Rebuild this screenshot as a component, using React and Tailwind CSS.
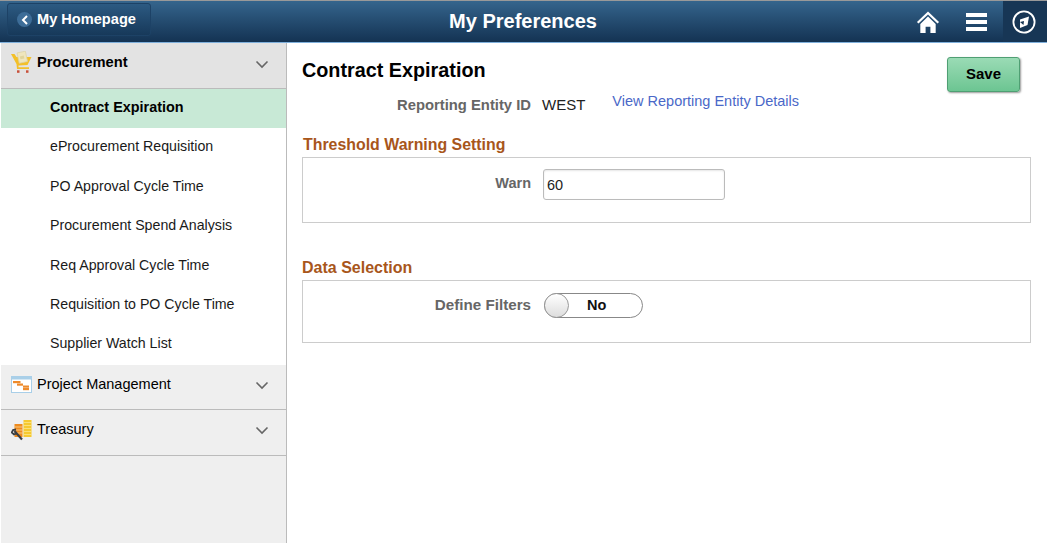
import React from "react";

const Chevron = () => (
  <svg width="14" height="9" viewBox="0 0 14 9" className="shrink-0">
    <path d="M1.5 1.5 L7 7 L12.5 1.5" fill="none" stroke="#666" strokeWidth="1.6" />
  </svg>
);

const Cart = () => (
  <svg width="21" height="22" viewBox="0 0 21 22" className="shrink-0">
    <path d="M0 3 H3.5 L5.5 6 H20.5 L16.5 14 L7.5 14.5 L7.5 16.2 H18 V18 H6 L5.5 13 Z" fill="#f3c029" />
    <rect x="7" y="1" width="8.5" height="10.5" fill="#efe6bd" stroke="#ddd2a6" strokeWidth="0.7" transform="rotate(-12 11 6)" />
    <rect x="9" y="5" width="4" height="3" fill="#e0d49c" transform="rotate(-12 11 6)" />
    <rect x="6" y="19.3" width="2.5" height="2.5" fill="#c8503a" />
    <rect x="15" y="19.3" width="2.5" height="2.5" fill="#c8503a" />
  </svg>
);

const Gantt = () => (
  <svg width="21" height="17" viewBox="0 0 21 17" className="mt-[1px] shrink-0">
    <rect x="0.5" y="0.5" width="20" height="16" fill="#fff" stroke="#a9cfe8" />
    <rect x="1" y="1" width="19" height="2.5" fill="#a9cfe8" />
    <rect x="2" y="5" width="7.5" height="2.2" fill="#ee8b2c" />
    <rect x="6" y="7.5" width="6" height="2.2" fill="#ee8b2c" />
    <rect x="12" y="9.5" width="6" height="2.2" fill="#ee8b2c" />
    <rect x="12" y="12" width="6" height="2.2" fill="#ee8b2c" />
  </svg>
);

const Treasury = () => (
  <svg width="21" height="21" viewBox="0 0 21 21" className="shrink-0">
    <rect x="12.5" y="0" width="8" height="17" fill="#f6c92f" />
    <path d="M12.5 2.5 H20.5 M12.5 5.5 H20.5 M12.5 8.5 H20.5 M12.5 11.5 H20.5 M12.5 14.5 H20.5" stroke="#fbe68a" strokeWidth="0.8" />
    <rect x="3.5" y="4" width="8" height="13" fill="#ee8b1f" />
    <path d="M3.5 7 H11.5 M3.5 10 H11.5 M3.5 13 H11.5" stroke="#fbd79a" strokeWidth="0.8" />
    <path d="M3.5 11 L11 19.5" fill="none" stroke="#3a3f45" strokeWidth="2.2" />
    <path d="M5 9.5 L2 10 L0.7 12.5 L3 14.5 L5.5 13.5" fill="none" stroke="#3a3f45" strokeWidth="1.8" />
  </svg>
);

const items = [
  "eProcurement Requisition",
  "PO Approval Cycle Time",
  "Procurement Spend Analysis",
  "Req Approval Cycle Time",
  "Requisition to PO Cycle Time",
  "Supplier Watch List",
];

const Group = ({ icon, label, h }) => (
  <div className={`flex ${h} items-start border-b border-[#bbbbbb] bg-[#efefef] pl-[10px] pr-[17px]`}>
    <div className="mt-[10px] w-[26px]">{icon}</div>
    <span className="mt-[10px] flex-1 text-[14.5px] leading-[18px] text-black">{label}</span>
    <div className="mt-[16px]"><Chevron /></div>
  </div>
);

export default function App() {
  return (
    <div className="flex h-[543px] w-[1047px] flex-col overflow-hidden bg-white font-['Liberation_Sans',Arial,sans-serif]">
      <header className="relative flex h-[43px] shrink-0 items-stretch border-t border-b border-t-[#999999] border-b-[#7fb0dc] bg-gradient-to-b from-[#35658d] to-[#143353]">
        <button className="ml-[7px] mt-[2px] flex h-[33px] w-[144px] items-center rounded-[3px] border border-[#1d4266] bg-gradient-to-b from-[#2c5a82] to-[#17395a] pl-[9px]">
          <span className="flex h-[15px] w-[15px] items-center justify-center rounded-full bg-[#3d6d98]">
            <svg width="8" height="10" viewBox="0 0 8 10">
              <path d="M6 1 L2 5 L6 9" fill="none" stroke="#fff" strokeWidth="2" />
            </svg>
          </span>
          <span className="ml-[5px] text-[14.6px] font-bold text-white">My Homepage</span>
        </button>
        <h1 className="absolute left-[300px] top-[7px] w-[446px] text-center text-[20px] font-bold leading-[27px] text-white">My Preferences</h1>
        <div className="ml-auto flex items-stretch">
          <div className="flex w-[24px] items-center justify-center">
            <svg width="25" height="24" viewBox="0 0 25 24">
              <path d="M12.5 1 L1 12 L2.6 13.6 L12.5 4.2 L22.4 13.6 L24 12 Z" fill="#fff" />
              <path d="M4.5 14 L12.5 6.4 L20.5 14 V23.5 H15 V17 H10 V23.5 H4.5 Z" fill="#fff" />
            </svg>
          </div>
          <div className="ml-[26px] flex w-[21px] flex-col justify-center gap-[3px]">
            <div className="h-[4px] bg-white" />
            <div className="h-[4px] bg-white" />
            <div className="h-[4px] bg-white" />
          </div>
          <div className="ml-[16px] flex w-[44px] items-center justify-center bg-[#173655]">
            <svg width="24" height="24" viewBox="0 0 24 24" className="ml-[-2px]">
              <circle cx="12" cy="12" r="10.6" fill="none" stroke="#fff" strokeWidth="1.8" />
              <path d="M8 9.5 L17 6.5 L15.5 15 L8 18 Z" fill="#fff" />
              <path d="M8 12 L12 11 L11.5 15 Z" fill="#173655" />
            </svg>
          </div>
        </div>
      </header>

      <div className="flex min-h-0 flex-1">
        <aside className="ml-[1px] flex w-[286px] shrink-0 flex-col border-r border-[#bbbbbb] bg-[#efefef]">
          <div className="flex h-[46px] items-start border-b border-[#bbbbbb] bg-[#e3e3e3] pl-[10px] pr-[17px]">
            <div className="mt-[8px] w-[26px]"><Cart /></div>
            <span className="mt-[10px] flex-1 text-[14.7px] font-bold leading-[18px] text-black">Procurement</span>
            <div className="mt-[17px]"><Chevron /></div>
          </div>
          <div className="flex h-[39px] items-center bg-[#c8e9d6] pb-[2px] pl-[49px] text-[14.4px] font-bold text-black">Contract Expiration</div>
          <div className="flex h-[237px] flex-col gap-[21.4px] bg-white pt-[9.35px]">
            {items.map((t) => (
              <div key={t} className="pl-[49px] text-[14.2px] leading-[18px] text-[#1a1a1a]">{t}</div>
            ))}
          </div>
          <Group icon={<Gantt />} label="Project Management" h="h-[45px]" />
          <Group icon={<Treasury />} label="Treasury" h="h-[46px]" />
        </aside>

        <main className="relative min-w-0 flex-1 pl-[15px] pr-[16px]">
          <h2 className="mt-[14px] text-[19.8px] font-bold leading-[27px] text-black">Contract Expiration</h2>
          <div className="mt-[11px] flex h-[20px] items-center">
            <span className="w-[229px] text-right text-[14.8px] font-bold text-[#666666]">Reporting Entity ID</span>
            <span className="ml-[11px] text-[15px] text-[#222222]">WEST</span>
            <a className="ml-[27px] -translate-y-[3px] text-[14.5px] text-[#4a68c8]">View Reporting Entity Details</a>
          </div>

          <h3 className="ml-[1px] mt-[21px] text-[15.9px] font-bold leading-[18px] text-[#a8561b]">Threshold Warning Setting</h3>
          <section className="mt-[3px] flex h-[66px] border border-[#cccccc] pt-[11px]">
            <span className="mt-[6px] w-[228px] text-right text-[14.5px] font-bold leading-[17px] text-[#666666]">Warn</span>
            <input readOnly value="60" className="ml-[12px] h-[31px] w-[182px] rounded-[3px] border border-[#bbbbbb] pl-[3px] text-[14.5px] text-[#222222] shadow-[inset_0_1px_2px_rgba(0,0,0,0.1)] outline-none" />
          </section>

          <h3 className="mt-[36px] text-[16px] font-bold leading-[18px] text-[#a8561b]">Data Selection</h3>
          <section className="mt-[3px] flex h-[63px] border border-[#cccccc] pt-[12px]">
            <span className="mt-[3px] w-[228px] text-right text-[15.2px] font-bold leading-[17px] text-[#666666]">Define Filters</span>
            <div className="relative ml-[13px] flex h-[25px] w-[99px] items-center rounded-full border border-[#888888] bg-white">
              <span className="absolute left-[-1px] top-[-1px] h-[25px] w-[25px] rounded-full border border-[#999999] bg-gradient-to-b from-white to-[#dddddd]" />
              <span className="ml-[42px] text-[14.5px] font-bold text-[#111111]">No</span>
            </div>
          </section>

          <button className="absolute right-[27px] top-[14px] h-[35px] w-[73px] rounded-[3px] border border-[#4f9f73] bg-gradient-to-b from-[#9adbb5] to-[#6cc592] text-[15px] font-bold text-black shadow-[1px_1px_2px_rgba(0,0,0,0.4)]">Save</button>
        </main>
      </div>
    </div>
  );
}
